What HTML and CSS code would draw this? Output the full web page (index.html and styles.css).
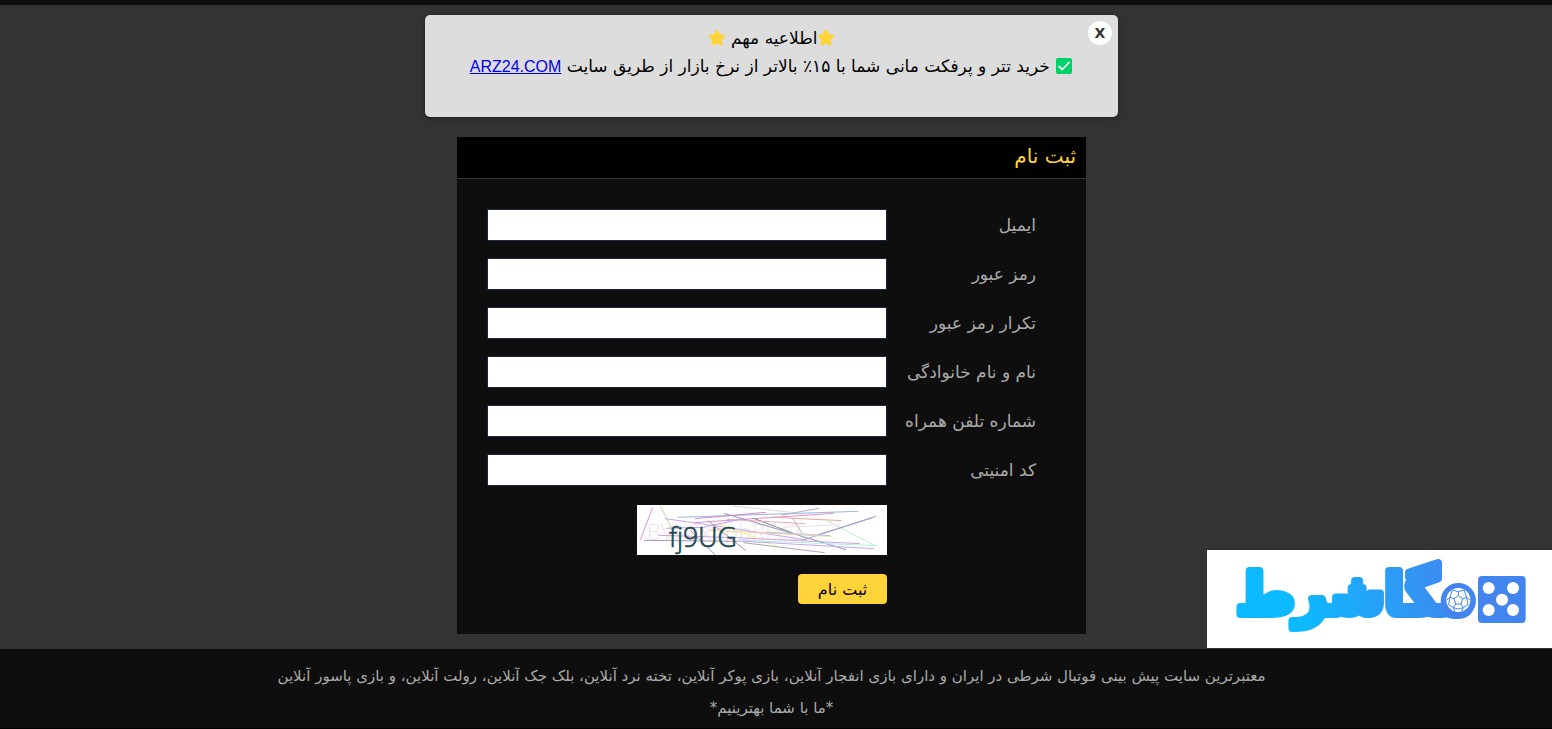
FILE: index.html
```html
<!DOCTYPE html>
<html lang="fa" dir="rtl">
<head>
  <meta charset="UTF-8">
  <meta name="viewport" content="width=device-width, initial-scale=1.0">
  <title>ثبت نام</title>
  <link rel="stylesheet" href="styles.css">
</head>
<body>
  <header class="topbar"></header>

  <main class="main">
    <section class="notice">
      <button type="button" class="notice-close" aria-label="بستن">X</button>
      <p class="notice-title"><svg class="emoji" viewBox="0 0 18 18"><path d="M9 2.500l2 4 4.500.7-3.300 3.200.8 4.500L9 12.800l-4 2.100.8-4.500L2.500 7.200 7 6.500z" fill="#ffd43b" stroke="#ffd43b" stroke-width="3" stroke-linejoin="round"/></svg>اطلاعیه مهم <svg class="emoji" viewBox="0 0 18 18"><path d="M9 2.500l2 4 4.500.7-3.300 3.200.8 4.500L9 12.800l-4 2.100.8-4.500L2.500 7.200 7 6.500z" fill="#ffd43b" stroke="#ffd43b" stroke-width="3" stroke-linejoin="round"/></svg></p>
      <p><svg class="emoji" viewBox="0 0 18 18"><rect x="1" y="1" width="16" height="16" rx="2" fill="#00d26a"/><path d="M4 9.500l3.300 3L14 5.500" fill="none" stroke="#fff" stroke-width="1.800" stroke-linecap="round" stroke-linejoin="round"/></svg> خرید تتر و پرفکت مانی شما با ۱۵٪ بالاتر از نرخ بازار از طریق سایت <a href="#">ARZ24.COM</a></p>
    </section>

    <section class="panel">
      <h1 class="panel-title">ثبت نام</h1>
      <form class="form">
        <label for="email">ایمیل</label>
        <input type="email" id="email">
        <label for="password">رمز عبور</label>
        <input type="password" id="password">
        <label for="password2">تکرار رمز عبور</label>
        <input type="password" id="password2">
        <label for="name">نام و نام خانوادگی</label>
        <input type="text" id="name">
        <label for="phone">شماره تلفن همراه</label>
        <input type="tel" id="phone">
        <label for="code">کد امنیتی</label>
        <input type="text" id="code">
        <svg class="captcha" viewBox="51 45 750 150">
          <rect x="51" y="45" width="750" height="150" fill="#fff"/>
          <text class="captcha-ghost" x="80" y="150">BVK8xhpbRFe2</text>
          <g fill="none" stroke-width="3">
            <path d="M61 150L98 52" stroke="#e28ee0"/>
            <path d="M121 48L154 114" stroke="#b4dc98"/>
            <path d="M136 86L330 114L560 150" stroke="#c2a8e8"/>
            <path d="M174 82L714 64" stroke="#9ab8dc"/>
            <path d="M222 98L640 70" stroke="#e58fcf"/>
            <path d="M225 86L438 67" stroke="#d985c7"/>
            <path d="M264 92L378 182" stroke="#c8918e"/>
            <path d="M312 70L520 131L678 179" stroke="#8593c0"/>
            <path d="M340 48L522 68" stroke="#d8ded0"/>
            <path d="M398 84L520 130" stroke="#819281"/>
            <path d="M486 75L597 55" stroke="#aab0d0"/>
            <path d="M462 82L665 92" stroke="#eda5a0"/>
            <path d="M518 84L546 130" stroke="#9bc3a5"/>
            <path d="M616 90L768 168" stroke="#b6f5c4"/>
            <path d="M768 79L546 151" stroke="#ad9bcb"/>
            <path d="M755 84L595 134" stroke="#a29bc9"/>
            <path d="M320 88L555 101" stroke="#f0a5bd"/>
            <path d="M270 121L635 139" stroke="#eed197"/>
            <path d="M292 98L480 173" stroke="#edf58f"/>
            <path d="M115 136L350 143L720 161" stroke="#d2a0df"/>
            <path d="M72 151L355 154" stroke="#a798bb"/>
            <path d="M350 150L770 167" stroke="#a9f1df"/>
            <path d="M356 153L762 176" stroke="#cba0f3"/>
            <path d="M370 158L614 188" stroke="#b7a3b5"/>
            <path d="M212 122L285 194" stroke="#9a91cf"/>
            <path d="M138 115L250 112L360 88" stroke="#b8a0ee"/>
            <path d="M490 112L660 104" stroke="#f4dbe7"/>
            <path d="M435 126L630 137" stroke="#bfc4da"/>
          </g>
          <text class="captcha-code" x="147" y="172">fj9UG</text>
        </svg>
        <button type="submit" class="submit">ثبت نام</button>
      </form>
    </section>
  </main>

  <footer class="footer">
    <p>معتبرترین سایت پیش بینی فوتبال شرطی در ایران و دارای بازی انفجار آنلاین، بازی پوکر آنلاین، تخته نرد آنلاین، بلک جک آنلاین، رولت آنلاین، و بازی پاسور آنلاین</p>
    <p>*ما با شما بهترینیم*</p>
  </footer>

  <a class="brand" href="#">
    <svg viewBox="21 30 1035 294">
      <defs>
        <linearGradient id="brandFill" gradientUnits="userSpaceOnUse" x1="300" y1="200" x2="800" y2="120">
          <stop offset="0" stop-color="#0db9ff"/>
          <stop offset="1" stop-color="#4385ee"/>
        </linearGradient>
      </defs>
      <text class="brand-name" x="464" y="222" text-anchor="middle" fill="url(#brandFill)" stroke="url(#brandFill)">مگاشرط</text>
      <circle cx="775" cy="182" r="53" fill="#4385ee"/>
      <circle cx="775" cy="180" r="36" fill="#fff"/>
      <g fill="none" stroke="#4385ee" stroke-width="3">
        <path d="M775 167l13 9-5 16h-16l-5-16z"/>
        <path d="M775 167v-12M788 176l12-4M783 192l7 11M767 192l-7 11M762 176l-12-4"/>
        <path d="M757 150l18 5 18-5M800 172l-8-22M800 172l10 8M800 172l4 22-14 9M790 203l-5 12M790 203l-15 4-15-4M760 203l5 12M760 203l-14-9 4-22M750 172l7-22M750 172l-10 8"/>
      </g>
      <rect x="834" y="108" width="143" height="141" rx="12" fill="#4385ee"/>
      <g fill="#fff">
        <circle cx="866" cy="144" r="18"/>
        <circle cx="939" cy="144" r="18"/>
        <circle cx="906" cy="179" r="18"/>
        <circle cx="866" cy="210" r="18"/>
        <circle cx="939" cy="210" r="18"/>
      </g>
    </svg>
  </a>
</body>
</html>
```
FILE: styles.css
```css
* {
  margin: 0;
  padding: 0;
  box-sizing: border-box;
}
body {
  min-height: 100vh;
  display: flex;
  flex-direction: column;
  background: #333;
  color: #aaa;
  font-family: "DejaVu Sans", sans-serif;
  font-size: 17px;
}
.topbar {
  height: 5px;
  background: #0e0e0e;
}
.main {
  flex: 1;
  display: flex;
  flex-direction: column;
  align-items: center;
  gap: 20px;
  padding: 10px 9px 15px 0;
}
.notice {
  position: relative;
  width: 100%;
  max-width: 693px;
  min-height: 102px;
  padding: 9px 30px;
  background: #ddd;
  color: #000;
  border-radius: 5px;
  box-shadow: 0 1px 5px rgba(0, 0, 0, 0.4);
  text-align: center;
  line-height: 28px;
}
.notice a {
  color: #00e;
  font-family: "Liberation Sans", sans-serif;
  font-size: 16px;
}
.notice-close {
  position: absolute;
  top: 6px;
  right: 6px;
  width: 24px;
  height: 24px;
  border: none;
  border-radius: 50%;
  background: #fff;
  color: #333;
  font-family: "DejaVu Sans", sans-serif;
  font-size: 14px;
  font-weight: bold;
  cursor: pointer;
}
.emoji {
  width: 18px;
  height: 18px;
  vertical-align: -3px;
}
.panel {
  width: 100%;
  max-width: 629px;
  background: #0e0e0e;
}
.panel-title {
  height: 42px;
  padding: 0 10px;
  background: #000;
  border-bottom: 1px solid #333;
  color: #ffd43b;
  font-size: 20px;
  font-weight: 500;
  line-height: 38px;
}
.form {
  display: grid;
  grid-template-columns: 1fr 400px;
  gap: 17px 0;
  align-items: center;
  padding: 30px 50px 30px 30px;
}
.form input {
  width: 100%;
  height: 32px;
  padding: 0 8px;
  border: 1px solid #1c2541;
  background: #fff;
  font-size: 16px;
}
.captcha {
  grid-column: 2;
  width: 250px;
  height: 50px;
  margin: 2px 0;
  direction: ltr;
}
.captcha-ghost {
  font-family: "Open Sans", sans-serif;
  font-size: 68px;
  font-weight: 300;
  fill: #f4dff2;
}
.captcha-code {
  font-family: "Open Sans", sans-serif;
  font-size: 80px;
  font-weight: 300;
  fill: #1b494d;
  stroke: #1b494d;
  stroke-width: 2px;
}
.submit {
  grid-column: 2;
  justify-self: start;
  min-width: 89px;
  height: 30px;
  padding: 0 18px;
  border: none;
  border-radius: 4px;
  background: #ffd43b;
  color: #000;
  font-family: inherit;
  font-size: 16px;
  cursor: pointer;
}
.footer {
  padding: 11px 9px 4px 0;
  background: #0e0e0e;
  border-bottom: 1px solid #000;
  font-size: 15px;
  line-height: 32px;
  text-align: center;
}
.brand {
  position: fixed;
  right: 0;
  bottom: 81px;
  width: 345px;
  height: 98px;
  background: #fff;
}
.brand svg {
  display: block;
  width: 100%;
  height: 100%;
}
.brand-name {
  font-family: "DejaVu Sans", sans-serif;
  font-size: 168px;
  font-weight: bold;
  stroke-width: 24px;
  stroke-linejoin: round;
}
```
